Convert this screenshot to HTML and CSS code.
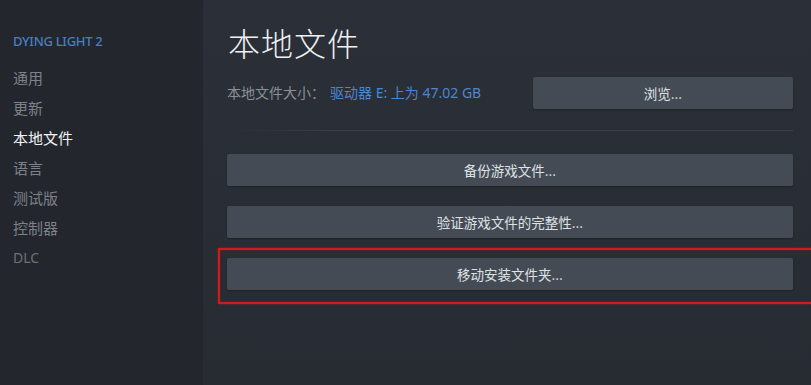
FILE: index.html
```html
<!DOCTYPE html>
<html lang="zh-CN">
<head>
<meta charset="utf-8">
<title>本地文件</title>
<link rel="stylesheet" href="styles.css">
</head>
<body>
<div class="app">
  <nav class="sidebar">
    <div class="game-title">DYING LIGHT 2</div>
    <ul class="nav">
      <li>通用</li>
      <li>更新</li>
      <li class="active">本地文件</li>
      <li>语言</li>
      <li>测试版</li>
      <li>控制器</li>
      <li>DLC</li>
    </ul>
  </nav>
  <main class="content">
    <h1 class="page-title">本地文件</h1>
    <div class="size-row">
      <div class="size-info"><span class="label">本地文件大小：</span><span class="value">驱动器 E: 上为 47.02 GB</span></div>
      <button class="btn btn-browse">浏览...</button>
    </div>
    <div class="separator"></div>
    <div class="actions">
      <button class="btn">备份游戏文件...</button>
      <button class="btn">验证游戏文件的完整性...</button>
      <div class="highlight-wrap">
        <button class="btn">移动安装文件夹...</button>
        <div class="highlight"></div>
      </div>
    </div>
  </main>
</div>
</body>
</html>
```

FILE: styles.css
```css
* { box-sizing: border-box; }
html, body {
  margin: 0;
  padding: 0;
  width: 811px;
  height: 385px;
  overflow: hidden;
  background: #282c34;
  font-family: "Noto Sans", "Noto Sans CJK SC", sans-serif;
}
.app {
  display: flex;
  height: 385px;
}
.sidebar {
  width: 203px;
  flex: none;
  background: #23262d;
  padding: 33px 0 0 13px;
}
.game-title {
  color: #4a7fc1;
  font-size: 13px;
  line-height: 16px;
  font-weight: 500;
  letter-spacing: -0.3px;
}
.nav {
  list-style: none;
  margin: 14px 0 0 0;
  padding: 0;
}
.nav li {
  color: #7c828a;
  font-size: 15px;
  line-height: 30px;
  height: 30px;
  font-family: "Noto Sans CJK SC", "Noto Sans", sans-serif;
}
.nav li:last-child {
  font-family: "Noto Sans", sans-serif;
  font-size: 14px;
  color: #6c727a;
}
.nav li.active {
  color: #f2f3f4;
}
.content {
  flex: 1;
  padding: 0 18px 0 24px;
  background: linear-gradient(180deg, #2b2f37 0%, #272b32 100%);
  font-family: "Noto Sans CJK SC", sans-serif;
}
.page-title {
  margin: 22px 0 0 1px;
  font-size: 32px;
  line-height: 40px;
  font-weight: 300;
  letter-spacing: 1px;
  color: #eef0f2;
}
.size-row {
  display: flex;
  align-items: center;
  justify-content: space-between;
  margin-top: 14px;
}
.size-info {
  font-size: 14px;
  line-height: 32px;
}
.label { color: #8a9098; }
.value {
  color: #4b87d0;
  margin-left: 5px;
  font-family: "Noto Sans", "Noto Sans CJK SC", sans-serif;
}
.btn {
  display: block;
  width: 100%;
  height: 32px;
  border: none;
  border-radius: 2px;
  background: #454b55;
  color: #dfe2e5;
  font-family: "Noto Sans CJK SC", sans-serif;
  font-size: 13.5px;
  padding: 0;
  box-shadow: 0 1px 2px rgba(0,0,0,0.25);
}
.btn-browse {
  width: 260px;
}
.separator {
  height: 1px;
  margin-top: 21px;
  background: linear-gradient(90deg, rgba(60,65,74,0) 0%, #3a3f47 20%, #3a3f47 100%);
}
.actions {
  display: flex;
  flex-direction: column;
  gap: 20px;
  margin-top: 23px;
}
.highlight-wrap {
  position: relative;
}
.highlight {
  position: absolute;
  left: -9px;
  right: -40px;
  top: -10px;
  bottom: -14px;
  border: 2px solid #d01a20;
  box-shadow: 0 0 2px rgba(220,30,35,0.6), inset 0 0 2px rgba(220,30,35,0.5);
  pointer-events: none;
}
```
